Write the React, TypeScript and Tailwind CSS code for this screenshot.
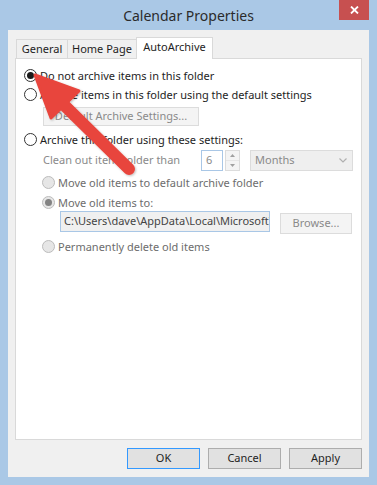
import React from 'react'

function Radio({ checked, disabled }: { checked?: boolean; disabled?: boolean }) {
  return (
    <span
      className={`flex h-[13px] w-[13px] flex-shrink-0 items-center justify-center rounded-full border ${
        disabled ? 'border-[#bcbcbc] bg-[#e6e6e6]' : 'border-[#333333] bg-white'
      }`}
    >
      {checked && (
        <span className={`h-[7px] w-[7px] rounded-full ${disabled ? 'bg-[#838383]' : 'bg-[#1a1a1a]'}`} />
      )}
    </span>
  )
}

function RadioRow({
  label,
  checked,
  disabled,
  className = ''
}: {
  label: string
  checked?: boolean
  disabled?: boolean
  className?: string
}) {
  return (
    <div className={`flex h-[16px] items-center gap-[3px] ${className}`}>
      <Radio checked={checked} disabled={disabled} />
      <span className={`whitespace-nowrap leading-none ${disabled ? 'text-[#6d6d6d]' : 'text-[#1e1e1e]'}`}>
        {label}
      </span>
    </div>
  )
}

function DialogButton({ label, primary }: { label: string; primary?: boolean }) {
  return (
    <button
      className={`flex h-[21px] w-[73px] items-center justify-center border bg-[#e1e1e1] text-[#1e1e1e] ${
        primary ? 'border-[#3399ff]' : 'border-[#adadad]'
      }`}
    >
      {label}
    </button>
  )
}

function Arrow() {
  // red annotation arrow pointing at the first option
  return (
    <svg className="pointer-events-none absolute left-0 top-0" width="377" height="485" viewBox="0 0 377 485">
      <defs>
        <filter id="sh" x="-20%" y="-20%" width="140%" height="140%">
          <feDropShadow dx="1" dy="1" stdDeviation="1" floodColor="#000" floodOpacity="0.25" />
        </filter>
      </defs>
      <g filter="url(#sh)">
        <line x1="62" y1="103" x2="129" y2="169" stroke="#e8453c" strokeWidth="12" strokeLinecap="round" />
        <polygon points="35,75 51,118 79,91" fill="#e8453c" stroke="#e8453c" strokeWidth="3" strokeLinejoin="round" />
      </g>
    </svg>
  )
}

export default function App() {
  return (
    <div className="relative flex h-[485px] w-[377px] flex-col bg-[#aac8e6] font-['Segoe_UI','Noto_Sans',sans-serif] text-[11px]">
      {/* title bar */}
      <div className="relative flex h-[30px] items-center justify-center">
        <span className="text-[14px] text-[#2b2b2b]">Calendar Properties</span>
        <div className="absolute right-[8px] top-0 flex h-[20px] w-[30px] items-center justify-center bg-[#c75050]">
          <svg width="9" height="8" viewBox="0 0 9 8">
            <path d="M1 0.5 L8 7.5 M8 0.5 L1 7.5" stroke="#fff" strokeWidth="1.8" />
          </svg>
        </div>
      </div>

      {/* client area */}
      <div className="mx-[8px] flex h-[447px] flex-col bg-[#f0f0f0] px-[7px] pt-[7px]">
        {/* tabs */}
        <div className="relative z-10 flex h-[21px] items-end pl-[1px]">
          <div className="flex h-[19px] w-[52px] items-center justify-center border border-b-0 border-[#d9d9d9] bg-[#f0f0f0] text-[#1e1e1e]">
            General
          </div>
          <div className="flex h-[19px] w-[69px] items-center justify-center border border-b-0 border-l-0 border-[#d9d9d9] bg-[#f0f0f0] text-[#1e1e1e]">
            Home Page
          </div>
          <div className="-mb-[1px] -ml-[1px] flex h-[22px] w-[77px] items-center justify-center border border-b-0 border-[#d9d9d9] bg-white pb-[2px] text-[#1e1e1e]">
            AutoArchive
          </div>
        </div>

        {/* tab panel */}
        <div className="flex h-[382px] flex-col border border-[#d9d9d9] bg-white pl-[8px] pt-[8px]">
          <RadioRow label="Do not archive items in this folder" checked />
          <RadioRow className="mt-[3px]" label="Archive items in this folder using the default settings" />
          <div className="ml-[19px] mt-[5px] flex h-[19px] w-[156px] items-center justify-center border border-[#dcdcdc] bg-[#f4f4f4] text-[#8a8a8a]">
            Default Archive Settings...
          </div>
          <RadioRow className="mt-[5px]" label="Archive this folder using these settings:" />

          <div className="ml-[19px] mt-[3px] flex h-[21px] items-center">
            <span className="w-[158px] whitespace-nowrap text-[#8a8a8a]">Clean out items older than</span>
            <div className="flex h-[21px] w-[22px] items-center border border-[#a9c7e6] bg-white pl-[4px] text-[#8a8a8a]">
              6
            </div>
            <div className="ml-[2px] flex h-[21px] w-[15px] flex-col border border-[#dcdcdc] bg-[#f4f4f4]">
              <div className="flex flex-1 items-center justify-center border-b border-[#e6e6e6]">
                <svg width="5" height="3" viewBox="0 0 5 3"><path d="M0 3 L2.5 0 L5 3Z" fill="#a0a0a0" /></svg>
              </div>
              <div className="flex flex-1 items-center justify-center">
                <svg width="5" height="3" viewBox="0 0 5 3"><path d="M0 0 L2.5 3 L5 0Z" fill="#a0a0a0" /></svg>
              </div>
            </div>
            <div className="ml-[10px] flex h-[21px] w-[103px] items-center justify-between border border-[#dcdcdc] bg-[#efefef] pl-[4px] pr-[5px] text-[#8a8a8a]">
              <span>Months</span>
              <svg width="8" height="5" viewBox="0 0 8 5"><path d="M0.5 0.5 L4 4 L7.5 0.5" fill="none" stroke="#b0b0b0" strokeWidth="1.2" /></svg>
            </div>
          </div>

          <RadioRow className="ml-[18px] mt-[3px]" label="Move old items to default archive folder" disabled />
          <RadioRow className="ml-[18px] mt-[4px]" label="Move old items to:" checked disabled />

          <div className="ml-[36px] mt-[1px] flex h-[23px] items-start">
            <div className="flex h-[21px] w-[210px] items-center overflow-hidden whitespace-nowrap border border-[#a9c7e6] bg-[#f0f0f0] pl-[3px] text-[#444444]">
              C:\Users\dave\AppData\Local\Microsoft\
            </div>
            <div className="ml-[10px] mt-[2px] flex h-[21px] w-[72px] items-center justify-center border border-[#dcdcdc] bg-[#f4f4f4] text-[#8a8a8a]">
              Browse...
            </div>
          </div>

          <RadioRow className="ml-[18px] mt-[4px]" label="Permanently delete old items" disabled />
        </div>

        {/* dialog buttons */}
        <div className="mt-[8px] flex justify-end gap-[8px]">
          <DialogButton label="OK" primary />
          <DialogButton label="Cancel" />
          <DialogButton label="Apply" />
        </div>
      </div>

      <Arrow />
    </div>
  )
}
